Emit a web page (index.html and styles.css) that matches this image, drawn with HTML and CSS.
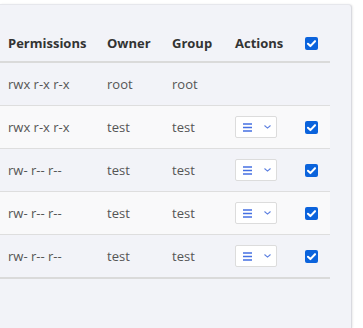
FILE: index.html
```html
<!DOCTYPE html>
<html lang="en">
<head>
    <meta charset="UTF-8">
    <title>Files</title>
    <link rel="stylesheet" href="styles.css">
</head>
<body>
    <div class="panel">
        <table class="files">
            <colgroup>
                <col class="c-perm">
                <col class="c-owner">
                <col class="c-group">
                <col class="c-actions">
                <col class="c-check">
            </colgroup>
            <thead>
                <tr>
                    <th>Permissions</th>
                    <th>Owner</th>
                    <th>Group</th>
                    <th>Actions</th>
                    <th><span class="check"><svg viewBox="0 0 14 14"><path d="M3.2 7.3l2.6 2.5 5-5.3"/></svg></span></th>
                </tr>
            </thead>
            <tbody>
                <tr>
                    <td>rwx r-x r-x</td>
                    <td>root</td>
                    <td>root</td>
                    <td></td>
                    <td></td>
                </tr>
                <tr>
                    <td>rwx r-x r-x</td>
                    <td>test</td>
                    <td>test</td>
                    <td><button class="menu"><svg class="bars" viewBox="0 0 9 9"><path d="M0 1h9M0 4.5h9M0 8h9"/></svg><svg class="chev" viewBox="0 0 7 4"><path d="M0.5 0.5l3 2.6 3-2.6"/></svg></button></td>
                    <td><span class="check"><svg viewBox="0 0 14 14"><path d="M3.2 7.3l2.6 2.5 5-5.3"/></svg></span></td>
                </tr>
                <tr>
                    <td>rw- r-- r--</td>
                    <td>test</td>
                    <td>test</td>
                    <td><button class="menu"><svg class="bars" viewBox="0 0 9 9"><path d="M0 1h9M0 4.5h9M0 8h9"/></svg><svg class="chev" viewBox="0 0 7 4"><path d="M0.5 0.5l3 2.6 3-2.6"/></svg></button></td>
                    <td><span class="check"><svg viewBox="0 0 14 14"><path d="M3.2 7.3l2.6 2.5 5-5.3"/></svg></span></td>
                </tr>
                <tr>
                    <td>rw- r-- r--</td>
                    <td>test</td>
                    <td>test</td>
                    <td><button class="menu"><svg class="bars" viewBox="0 0 9 9"><path d="M0 1h9M0 4.5h9M0 8h9"/></svg><svg class="chev" viewBox="0 0 7 4"><path d="M0.5 0.5l3 2.6 3-2.6"/></svg></button></td>
                    <td><span class="check"><svg viewBox="0 0 14 14"><path d="M3.2 7.3l2.6 2.5 5-5.3"/></svg></span></td>
                </tr>
                <tr>
                    <td>rw- r-- r--</td>
                    <td>test</td>
                    <td>test</td>
                    <td><button class="menu"><svg class="bars" viewBox="0 0 9 9"><path d="M0 1h9M0 4.5h9M0 8h9"/></svg><svg class="chev" viewBox="0 0 7 4"><path d="M0.5 0.5l3 2.6 3-2.6"/></svg></button></td>
                    <td><span class="check"><svg viewBox="0 0 14 14"><path d="M3.2 7.3l2.6 2.5 5-5.3"/></svg></span></td>
                </tr>
            </tbody>
        </table>
    </div>
</body>
</html>
```

FILE: styles.css
```css
html, body {
    height: 100%;
}

body {
    margin: 0;
    background: #ffffff;
    font-family: "Open Sans", "Noto Sans", Arial, sans-serif;
    font-size: 13px;
    color: #555555;
    overflow: hidden;
}

.panel {
    box-sizing: border-box;
    height: calc(100% - 4px);
    margin: 4px 11px 0 0;
    padding-top: 20px;
    background: #f2f3f8;
    border-top: 1px solid #e6e7ec;
    border-right: 1px solid #d9dae0;
    border-top-right-radius: 4px;
    box-shadow: 1px 0 2px rgba(0, 0, 0, 0.08);
}

.files {
    width: 330px;
    table-layout: fixed;
    border-collapse: collapse;
}

.c-perm { width: 99px; }
.c-owner { width: 65px; }
.c-group { width: 63px; }
.c-actions { width: 70px; }
.c-check { width: 33px; }

.files th,
.files td {
    padding: 0 0 0 8px;
    text-align: left;
    vertical-align: middle;
    white-space: nowrap;
}

.files th {
    height: 36px;
    color: #333333;
    font-weight: 700;
    border-bottom: 2px solid #dadada;
}

.files td {
    height: 42px;
    border-bottom: 1px solid #dedede;
}

.files tbody tr:nth-child(even) {
    background: #f9f9fa;
}

.files tbody tr:last-child td {
    border-bottom: 2px solid #dadada;
}

.check {
    display: block;
    width: 13px;
    height: 13px;
    background: #0b63dc;
    border-radius: 2px;
}

.check svg {
    display: block;
    width: 13px;
    height: 13px;
    fill: none;
    stroke: #ffffff;
    stroke-width: 2.2;
    stroke-linecap: round;
    stroke-linejoin: round;
}

.menu {
    display: flex;
    align-items: center;
    box-sizing: border-box;
    width: 42px;
    height: 22px;
    padding: 0 0 0 7px;
    background: #ffffff;
    border: 1px solid #dcdcdc;
    border-radius: 2px;
}

.bars {
    width: 9px;
    height: 9px;
    fill: none;
    stroke: #4570e2;
    stroke-width: 1.3;
}

.chev {
    width: 7px;
    height: 4px;
    margin-left: 12px;
    fill: none;
    stroke: #5b7fe0;
    stroke-width: 1.1;
}
```
